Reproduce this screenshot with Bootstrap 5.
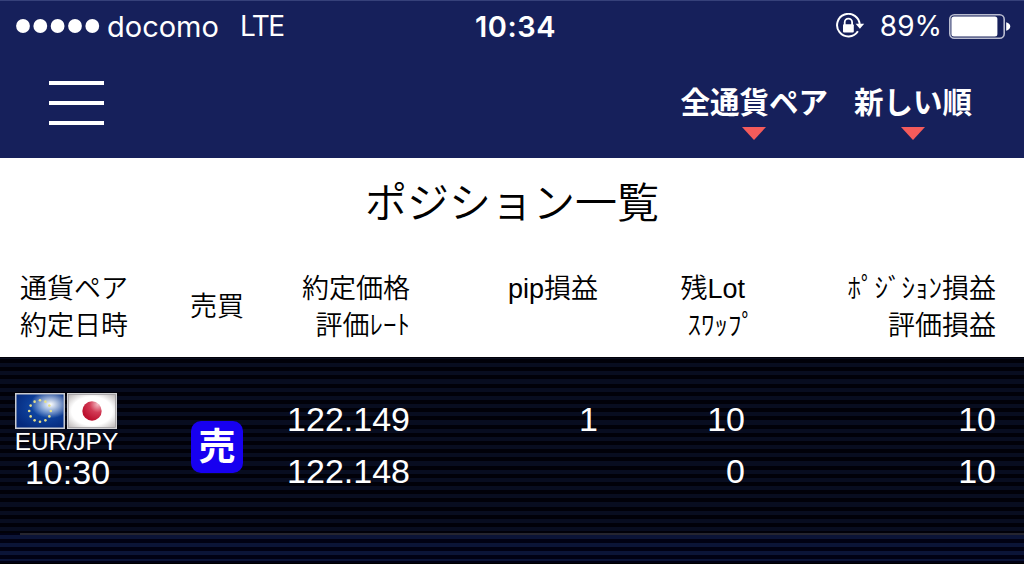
<!DOCTYPE html>
<html lang="ja">
<head>
  <meta charset="UTF-8" />
  <meta name="viewport" content="width=device-width, initial-scale=1" />
  <title>ポジション一覧</title>
  <link href="https://cdn.jsdelivr.net/npm/bootstrap@5.3.3/dist/css/bootstrap.min.css" rel="stylesheet" />
  <style>
    body {
      font-family: "Liberation Sans", "Noto Sans CJK JP", sans-serif;
      background: #000;
      overflow: hidden;
    }
    .app-header { height: 158px; background: #16205b; border-top: 1px solid #36417a; }
    .status-bar { height: 51px; padding: 0 13px 0 16px; font-family: Inter, sans-serif; font-size: 29px; line-height: 51px; }
    .status-side { flex: 1 1 0; }
    .signal-dots { margin: 0 7px 2px 0; }
    .status-clock { font-weight: 600; font-size: 29px; letter-spacing: .5px; margin-left: 4px; }
    .carrier { letter-spacing: 0; }
    .network { margin-left: 21px; font-size: 28px; letter-spacing: -1.4px; }
    .level { margin: 0 7px 0 15px; font-size: 28px; }

    .menu-bar { height: 106px; padding: 0 52px 0 49px; }
    .menu-btn { width: 55px; height: 44px; margin-top: 29px; }
    .menu-btn span { height: 4px; background: #fff; }
    .filters { gap: 26px; padding-top: 33px; }
    .filter-btn { font-size: 29.5px; line-height: 36px; font-weight: 700; }
    .filter-btn svg { margin-top: 6px; }

    .page-title { height: 90px; font-size: 42px; line-height: 92px; font-weight: 350; }
    .pos-grid {
      display: grid;
      grid-template-columns: 148px 138px 124px 188px 147px 251px;
    }
    .pos-head { height: 109px; padding-top: 23px; font-size: 27px; line-height: 37px; font-weight: 350; }
    .head-pair { padding-left: 20px; }
    .head-side { padding-top: 18px; }
    /* the trailing handakuten hangs past the column edge */
    .hang { margin-right: -10px; }

    .pos-row {
      height: 177px;
      padding-top: 36px;
      font-size: 34px;
      line-height: 52px;
      background: repeating-linear-gradient(#010109 0 4.1px, #080d20 4.1px 8.2px) 0 2px;
    }
    .pair-cell { width: 133px; line-height: 1; }
    .flags { gap: 2px; margin-right: 2px; }
    .pair-name { font-size: 24.5px; line-height: 26px; }
    .pair-time { line-height: 35px; margin-left: 2px; }
    .side-tag {
      width: 52px; height: 52px;
      margin-top: 28px;
      border-radius: 10px;
      background: #1700f0;
      font-size: 37px; line-height: 53px; font-weight: 700;
    }
    .next-row {
      height: 30px;
      background: repeating-linear-gradient(#010113 0 4px, #0b1437 4px 8px) 0 -2px;
    }
    .row-line { height: 2px; margin-left: 20px; margin-top: -1px; background: #25252f; }
  </style>
</head>
<body>

  <header class="app-header text-white">
    <div class="status-bar d-flex align-items-center">
      <div class="status-side d-flex align-items-center">
        <svg class="signal-dots" width="84" height="14" viewBox="0 0 84 14" fill="#fff">
          <circle cx="7" cy="7" r="6.9"/><circle cx="24.3" cy="7" r="6.9"/><circle cx="41.6" cy="7" r="6.9"/><circle cx="59" cy="7" r="6.9"/><circle cx="76.3" cy="7" r="6.9"/>
        </svg>
        <span class="carrier">docomo</span>
        <span class="network">LTE</span>
      </div>
      <div class="status-clock">10:34</div>
      <div class="status-side d-flex align-items-center justify-content-end">
        <!-- rotation lock -->
        <svg width="30" height="28" viewBox="0 0 30 28">
          <path d="M22.9 19.3A11.3 11.3 0 1 1 24.7 13" transform="translate(0 -1)" fill="none" stroke="#fff" stroke-width="2"/>
          <path d="M20.6 10.7h8.6l-4.3 5z" fill="#fff"/>
          <path d="M9.7 12V9.3a3.7 3.7 0 0 1 7.4 0V12" fill="none" stroke="#fff" stroke-width="1.8"/>
          <rect x="8" y="11.2" width="10.8" height="8.3" rx="1" fill="#fff"/>
        </svg>
        <span class="level">89%</span>
        <svg width="62" height="26" viewBox="0 0 62 26">
          <rect x=".8" y=".8" width="54.4" height="23.4" rx="4.5" fill="none" stroke="#b9bccf" stroke-width="1.6"/>
          <rect x="2.4" y="2.4" width="46" height="20.2" rx="2.5" fill="#fff"/>
          <path d="M57.2 8.3c5.4 1.2 5.4 7.2 0 8.4z" fill="#fff"/>
        </svg>
      </div>
    </div>

    <nav class="menu-bar d-flex justify-content-between align-items-start">
      <div class="menu-btn d-flex flex-column justify-content-between" role="button">
        <span></span><span></span><span></span>
      </div>
      <div class="filters d-flex">
        <div class="filter-btn d-flex flex-column align-items-center" role="button">
          全通貨ペア
          <svg width="24" height="13"><path d="M0 0h24L12 13z" fill="#f45b5b"/></svg>
        </div>
        <div class="filter-btn d-flex flex-column align-items-center" role="button">
          新しい順
          <svg width="24" height="13"><path d="M0 0h24L12 13z" fill="#f45b5b"/></svg>
        </div>
      </div>
    </nav>
  </header>

  <main>
    <div class="bg-white text-black">
      <h1 class="page-title text-center m-0">ポジション一覧</h1>
      <div class="pos-grid pos-head text-end">
        <div class="head-pair text-start">通貨ペア<br>約定日時</div>
        <div class="head-side text-center">売買</div>
        <div>約定価格<br>評価ﾚｰﾄ</div>
        <div>pip損益</div>
        <div>残Lot<div class="hang">ｽﾜｯﾌﾟ</div></div>
        <div>ﾎﾟｼﾞｼｮﾝ損益<br>評価損益</div>
      </div>
    </div>

    <div class="pos-grid pos-row text-white text-end">
      <div class="pair-cell text-center">
        <div class="flags d-flex justify-content-center">
          <svg width="50" height="36" viewBox="0 0 50 36">
            <defs>
              <radialGradient id="shine" cx=".72" cy=".3" r=".42">
                <stop offset="0" stop-color="#fff"/><stop offset=".25" stop-color="#fff" stop-opacity=".75"/><stop offset="1" stop-color="#fff" stop-opacity="0"/>
              </radialGradient>
              <radialGradient id="blue" cx=".6" cy=".4" r=".7">
                <stop offset="0" stop-color="#1554b5"/><stop offset="1" stop-color="#052a7d"/>
              </radialGradient>
            </defs>
            <rect width="50" height="36" fill="#c9cbd0"/>
            <rect x="1.5" y="1.5" width="47" height="33" fill="url(#blue)"/>
            <rect x="1.5" y="1.5" width="47" height="33" fill="url(#shine)"/>
            <g id="stars" fill="#e6df8a"></g>
          </svg>
          <svg width="50" height="36" viewBox="0 0 50 36">
            <defs>
              <radialGradient id="paper" r=".72">
                <stop offset=".6" stop-color="#fff"/><stop offset="1" stop-color="#b5b0b0"/>
              </radialGradient>
              <radialGradient id="sun" cx=".8" cy=".15" r=".85">
                <stop offset="0" stop-color="#f3bcc5"/><stop offset=".5" stop-color="#d23a55"/><stop offset="1" stop-color="#bd1230"/>
              </radialGradient>
            </defs>
            <rect width="50" height="36" fill="#d2d2d4"/>
            <rect x="1.5" y="1.5" width="47" height="33" fill="url(#paper)" stroke="#8f8d90" stroke-width=".6"/>
            <circle cx="25" cy="18" r="9.7" fill="url(#sun)"/>
          </svg>
        </div>
        <div class="pair-name">EUR/JPY</div>
        <div class="pair-time">10:30</div>
      </div>
      <div class="d-flex justify-content-center">
        <div class="side-tag text-center">売</div>
      </div>
      <div>122.149<br>122.148</div>
      <div>1</div>
      <div>10<br>0</div>
      <div>10<br>10</div>
    </div>
    <div class="next-row">
      <div class="row-line"></div>
    </div>
  </main>

  <script src="https://cdn.jsdelivr.net/npm/bootstrap@5.3.3/dist/js/bootstrap.bundle.min.js"></script>
  <script>
    // 12 stars of the EU flag
    const stars = document.getElementById('stars');
    for (let i = 0; i < 12; i++) {
      const a = i * Math.PI / 6;
      const c = document.createElementNS('http://www.w3.org/2000/svg', 'circle');
      c.setAttribute('cx', 25 + 10.8 * Math.sin(a));
      c.setAttribute('cy', 18 - 10.8 * Math.cos(a));
      c.setAttribute('r', 1.3);
      stars.appendChild(c);
    }
  </script>
</body>
</html>
